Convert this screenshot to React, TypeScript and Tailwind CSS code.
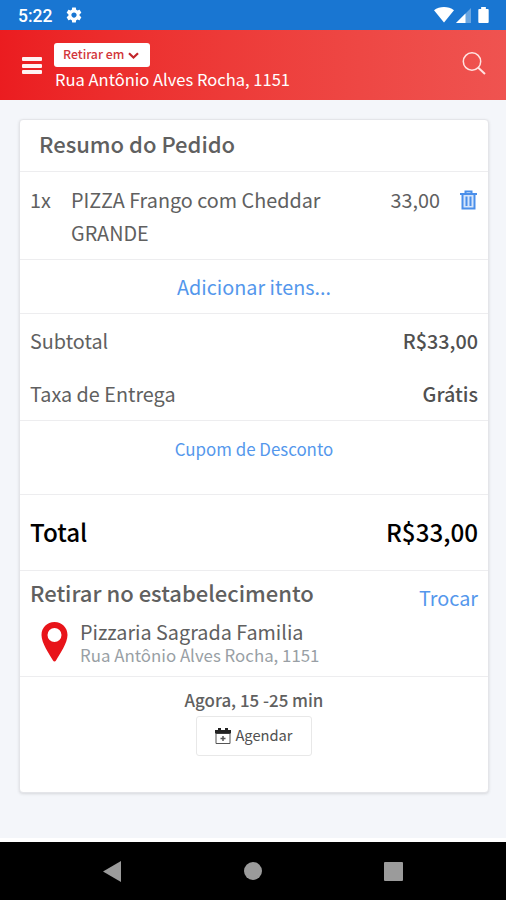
import { ReactNode } from 'react';

interface RowProps {
  className?: string;
  children: ReactNode;
}

function Row({ className = '', children }: RowProps) {
  return <div className={`flex shrink-0 border-b border-[#ededef] pl-[10px] pr-[10px] ${className}`}>{children}</div>;
}

function StatusBar() {
  return (
    <div className="flex h-[30px] items-center bg-[#1976d2] pl-[18px] pr-[16px] text-white">
      <span className="pt-[2px] font-[Roboto] text-[17.500px] font-medium leading-[28px]">5:22</span>
      <svg className="ml-[13px]" width="18" height="18" viewBox="0 0 24 24" fill="currentColor">
        <path d="M19.43 12.98c.04-.32.07-.64.07-.98s-.03-.66-.07-.98l2.11-1.65c.19-.15.24-.42.12-.64l-2-3.46c-.12-.22-.39-.3-.61-.22l-2.49 1c-.52-.4-1.08-.73-1.69-.98l-.38-2.65C14.46 2.18 14.25 2 14 2h-4c-.25 0-.46.18-.49.42l-.38 2.65c-.61.25-1.17.59-1.69.98l-2.49-1c-.23-.09-.49 0-.61.22l-2 3.46c-.13.22-.07.49.12.64l2.11 1.65c-.04.32-.07.65-.07.98s.03.66.07.98l-2.11 1.65c-.19.15-.24.42-.12.64l2 3.46c.12.22.39.3.61.22l2.49-1c.52.4 1.08.73 1.69.98l.38 2.65c.03.24.24.42.49.42h4c.25 0 .46-.18.49-.42l.38-2.65c.61-.25 1.17-.59 1.69-.98l2.49 1c.23.09.49 0 .61-.22l2-3.46c.12-.22.07-.49-.12-.64l-2.11-1.65zM12 15.5c-1.93 0-3.5-1.57-3.5-3.5s1.57-3.5 3.5-3.5 3.5 1.57 3.5 3.5-1.57 3.5-3.5 3.5z" />
      </svg>
      <div className="ml-auto flex items-center">
        <svg width="20" height="16" viewBox="0 0 20 16" fill="currentColor">
          <path d="M0 3.2C5.5-1 14.500-1 20 3.200L10 15.500z" />
        </svg>
        <svg className="ml-[2px]" width="15" height="15" viewBox="0 0 15 15" fill="currentColor">
          <path d="M0 15 15 0v15z" opacity=".35" />
          <path d="M0 15 9.500 5.500V15z" />
        </svg>
        <svg className="ml-[7px] mr-[1px]" width="11" height="16" viewBox="0 0 11 17" fill="currentColor">
          <path d="M3 0h5v2h2q1 0 1 1v13q0 1-1 1H1q-1 0-1-1V3q0-1 1-1h2z" />
        </svg>
      </div>
    </div>
  );
}

function Header() {
  return (
    <header className="flex h-[70px] bg-linear-to-r from-[#eb1c20] to-[#ef5350] text-white">
      <div className="ml-[22px] mt-[27px] flex w-5 flex-col gap-[2.500px]">
        <span className="h-1 rounded-[1px] bg-white/95" />
        <span className="h-1 rounded-[1px] bg-white/95" />
        <span className="h-1 rounded-[1px] bg-white/95" />
      </div>
      <div className="ml-[12px] flex flex-col items-start pt-[13px]">
        <button className="flex h-6 w-[96px] items-center rounded-[3px] bg-white pl-[9px] text-[#d2353a]">
          <span className="-mt-[3px] whitespace-nowrap text-[12.300px] font-medium leading-[20px]">Retirar em</span>
          <svg className="ml-[4px]" width="11" height="7" viewBox="0 0 11 7" fill="none" stroke="#c2262b" strokeWidth="2.2">
            <path d="m1 1.200 4.500 4.300L10 1.200" />
          </svg>
        </button>
        <span className="ml-[1px] whitespace-nowrap text-[16.550px] leading-[24px]">Rua Antônio Alves Rocha, 1151</span>
      </div>
      <svg className="ml-auto mr-[20px] mt-[21px]" width="24" height="25" viewBox="0 0 24 25" fill="none" stroke="#ffe3e1" strokeWidth="1.500">
        <circle cx="10" cy="10.500" r="8.700" />
        <path d="m16.300 16.800 6.700 6.300" strokeWidth="2" />
      </svg>
    </header>
  );
}

function OrderSummary() {
  return (
    <main className="ml-[19px] mr-[17px] mt-[19px] flex h-[674px] flex-col rounded-[4px] border border-[#e4e5e9] bg-white text-[19.800px] text-[#606060] shadow-[0_1px_3px_rgba(0,0,0,0.12)]">
      <Row className="h-[52px] pl-[19px]">
        <h1 className="whitespace-nowrap text-[22px] font-medium leading-[47px]">Resumo do Pedido</h1>
      </Row>
      <Row className="h-[88px] pt-[11px] leading-[33px]">
        <span className="w-[41px]">1x</span>
        <span className="w-[270px]">
          PIZZA Frango com Cheddar
          <br />
          GRANDE
        </span>
        <span className="ml-auto">33,00</span>
        <svg className="ml-[20px] mr-[1px] mt-[7px]" width="17" height="20" viewBox="0 0 17 20" fill="none" stroke="#4a8fea" strokeWidth="2">
          <path d="M2.500 4h12v14h-12z" fill="#d4e4fb" stroke="none" />
          <path d="M0 4h17M5.500 4V1.500h6V4M2.500 4v14.500h12V4M6.500 6.500v9.500M10.500 6.500v9.500" />
        </svg>
      </Row>
      <Row className="h-[54px] justify-center text-[#5497ec]">
        <span className="leading-[53px]">Adicionar itens...</span>
      </Row>
      <Row className="h-[107px] flex-col leading-[53px]">
        <div className="flex justify-between">
          <span>Subtotal</span>
          <span className="font-medium text-[#505050]">R$33,00</span>
        </div>
        <div className="flex justify-between">
          <span>Taxa de Entrega</span>
          <span className="font-medium text-[#505050]">Grátis</span>
        </div>
      </Row>
      <Row className="h-[74px] justify-center text-[16.900px] text-[#5497ec]">
        <span className="leading-[56px]">Cupom de Desconto</span>
      </Row>
      <Row className="h-[76px] justify-between text-[24.200px] font-medium leading-[74px] text-black">
        <span>Total</span>
        <span>R$33,00</span>
      </Row>
      <Row className="h-[106px] flex-col">
        <div className="flex h-[46px] justify-between">
          <h2 className="whitespace-nowrap text-[22px] font-medium leading-[43px]">Retirar no estabelecimento</h2>
          <span className="leading-[53px] text-[#5497ec]">Trocar</span>
        </div>
        <div className="flex">
          <svg className="ml-[11px] mt-[5px]" width="27" height="40" viewBox="0 0 27 40" fill="#e8141a">
            <path fillRule="evenodd" d="M13.500 0C6 0 .500 5.600.500 13c0 8 7.500 18.500 11.500 25.500 .7 1.300 2.300 1.300 3 0 4-7 11.500-17.500 11.500-25.500C26.500 5.600 21 0 13.500 0zm0 6a7 7 0 1 1 0 14 7 7 0 0 1 0-14z" />
          </svg>
          <div className="ml-[12px] flex flex-col pt-[3px]">
            <span className="h-[23px] leading-[23px]">Pizzaria Sagrada Familia</span>
            <span className="text-[16.850px] leading-[23px] text-[#999fa5]">Rua Antônio Alves Rocha, 1151</span>
          </div>
        </div>
      </Row>
      <div className="flex flex-col items-center">
        <span className="mt-[11px] text-[16.900px] font-medium leading-[24px]">Agora, 15 -25 min</span>
        <button className="mt-[4px] flex h-[40px] w-[116px] items-center justify-center gap-[4px] rounded-[3px] border border-[#e8e8e8] text-[14.700px] text-[#505050]">
          <svg width="16" height="16" viewBox="0 0 16 16" fill="none" stroke="#555">
            <path d="M1 5.500h14v10H1z" />
            <path d="M0 2h16v3.500H0zM3 0h3v2H3zM10 0h3v2h-3z" fill="#222" stroke="none" />
            <path d="M8 8v5M5.500 10.500h5" strokeWidth="1.500" />
          </svg>
          <span className="-mt-[1px]">Agendar</span>
        </button>
      </div>
    </main>
  );
}

function NavigationBar() {
  return (
    <nav className="mt-auto flex h-[62px] items-center justify-between border-t-4 border-white bg-black pl-[103px] pr-[103px]">
      <svg width="18" height="21" viewBox="0 0 18 21" fill="#9b9b9b">
        <path d="M18 0v21L0 10.500z" />
      </svg>
      <span className="size-[18px] rounded-full bg-[#9b9b9b]" />
      <span className="size-[19px] rounded-[1px] bg-[#9b9b9b]" />
    </nav>
  );
}

export default function App() {
  return (
    <div className="flex h-[900px] w-[506px] flex-col overflow-hidden bg-[#f4f6fa] font-['Noto_Sans_CJK_JP',sans-serif]">
      <StatusBar />
      <Header />
      <OrderSummary />
      <NavigationBar />
    </div>
  );
}
